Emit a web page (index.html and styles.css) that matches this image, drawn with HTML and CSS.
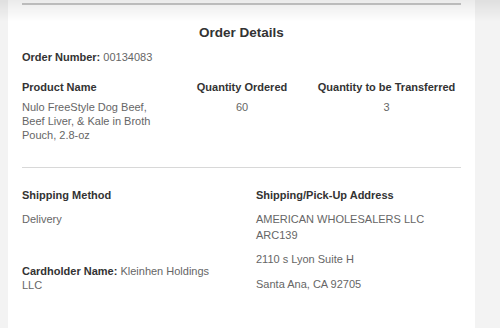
FILE: index.html
```html
<!DOCTYPE html>
<html lang="en">
<head>
  <meta charset="UTF-8">
  <meta name="viewport" content="width=device-width, initial-scale=1.0">
  <title>Order Details</title>
  <link rel="stylesheet" href="styles.css">
</head>
<body>

  <div class="card">
    <div class="top-rule"></div>

    <h2 class="title">Order Details</h2>

    <p class="order-number"><span class="label">Order Number:</span> 00134083</p>

    <div class="products">
      <div class="head">Product Name</div>
      <div class="head center">Quantity Ordered</div>
      <div class="head center">Quantity to be Transferred</div>

      <div class="cell product">Nulo FreeStyle Dog Beef, Beef Liver, &amp; Kale in Broth Pouch, 2.8-oz</div>
      <div class="cell center">60</div>
      <div class="cell center">3</div>
    </div>

    <hr class="divider">

    <div class="shipping">
      <div class="col">
        <div class="head">Shipping Method</div>
        <p class="value">Delivery</p>
        <p class="value cardholder"><span class="label">Cardholder Name:</span> Kleinhen Holdings LLC</p>
      </div>
      <div class="col address">
        <div class="head">Shipping/Pick-Up Address</div>
        <p class="value">AMERICAN WHOLESALERS LLC ARC139</p>
        <p class="value">2110 s Lyon Suite H</p>
        <p class="value">Santa Ana, CA 92705</p>
      </div>
    </div>
  </div>

</body>
</html>
```

FILE: styles.css
```css
body {
  font-family: 'Liberation Sans', Arial, sans-serif;
  background-color: #f3f3f3;
  margin: 0;
  height: 328px;
  overflow: hidden;
}

/* shadow dropped by the header above */
body::before {
  content: '';
  position: fixed;
  top: 0;
  left: 0;
  right: 0;
  height: 22px;
  background: linear-gradient(rgba(0, 0, 0, 0.08), rgba(0, 0, 0, 0));
  pointer-events: none;
}

.card {
  background-color: #fff;
  margin-left: 8px;
  width: 439px;
  height: 328px;
  padding: 0 14px;
}

.top-rule {
  padding-top: 3px;
  border-bottom: 2px solid #c9c9c9;
}

.title {
  font-size: 13.5px;
  color: #333;
  text-align: center;
  margin: 18px 0 0;
  line-height: 20px;
}

.label {
  font-weight: bold;
  color: #333;
}

.order-number {
  font-size: 11px;
  color: #666;
  margin: 7px 0 0;
  line-height: 14px;
}

.head {
  font-size: 11px;
  font-weight: bold;
  color: #333;
  line-height: 14px;
}

.center {
  text-align: center;
}

.products {
  display: grid;
  grid-template-columns: 150px 96px 1fr;
  column-gap: 22px;
  margin-top: 16px;
}

.cell {
  font-size: 11px;
  color: #666;
  line-height: 14px;
  margin-top: 6px;
}

.product {
  width: 140px;
}

.divider {
  border: none;
  border-top: 1px solid #d8d8d8;
  margin: 25px 0 0;
}

.shipping {
  display: grid;
  grid-template-columns: 234px 1fr;
  margin-top: 20px;
}

.value {
  font-size: 11px;
  color: #666;
  line-height: 16px;
  margin: 8.5px 0 0;
}

.address .value {
  width: 180px;
}

.cardholder {
  margin-top: 37px;
  width: 195px;
  line-height: 14px;
}
```
